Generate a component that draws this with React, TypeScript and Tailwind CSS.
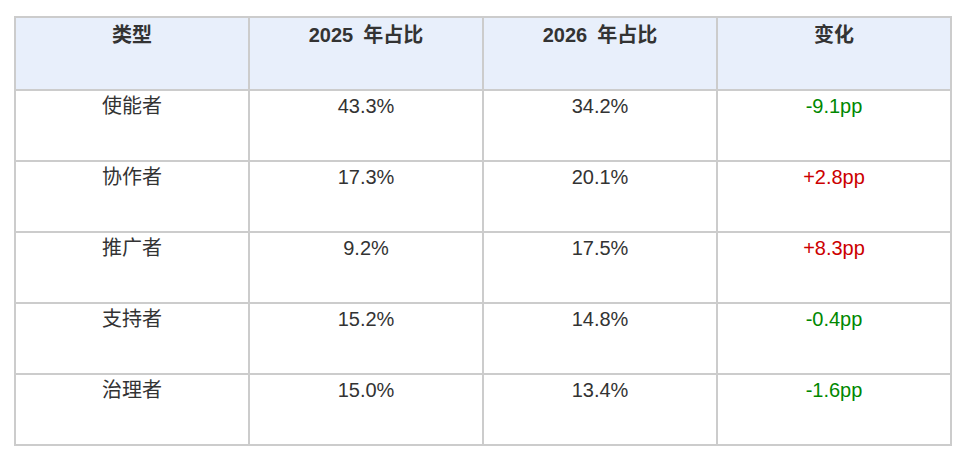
import React from 'react';

const rows = [
  { type: '使能者', y25: '43.3%', y26: '34.2%', delta: '-9.1pp', up: false },
  { type: '协作者', y25: '17.3%', y26: '20.1%', delta: '+2.8pp', up: true },
  { type: '推广者', y25: '9.2%', y26: '17.5%', delta: '+8.3pp', up: true },
  { type: '支持者', y25: '15.2%', y26: '14.8%', delta: '-0.4pp', up: false },
  { type: '治理者', y25: '15.0%', y26: '13.4%', delta: '-1.6pp', up: false },
];

const headers = [
  { year: '', label: '类型' },
  { year: '2025', label: '年占比' },
  { year: '2026', label: '年占比' },
  { year: '', label: '变化' },
];

const App: React.FC = () => {
  return (
    <div
      className="w-[964px] h-[464px] bg-white pt-[16px] pl-[14px] text-[#333]"
      style={{ fontFamily: '"Liberation Sans", "Noto Sans CJK SC", sans-serif' }}
    >
      <div className="w-[938px] grid grid-cols-4 border-l-2 border-t-2 border-[#cccccc] text-[20px] leading-[24px]">
        {headers.map((h) => (
          <div
            key={h.label + h.year}
            className="h-[73px] bg-[#e8effb] border-r-2 border-b-2 border-[#cccccc] text-center font-bold pt-[5px]"
          >
            {h.year && <span className="mr-[10px]">{h.year}</span>}
            {h.label}
          </div>
        ))}
        {rows.map((r) => (
          <React.Fragment key={r.type}>
            <div className="h-[71px] border-r-2 border-b-2 border-[#cccccc] text-center pt-[3px]">{r.type}</div>
            <div className="h-[71px] border-r-2 border-b-2 border-[#cccccc] text-center pt-[3px]">{r.y25}</div>
            <div className="h-[71px] border-r-2 border-b-2 border-[#cccccc] text-center pt-[3px]">{r.y26}</div>
            <div
              className={
                'h-[71px] border-r-2 border-b-2 border-[#cccccc] text-center pt-[3px] ' +
                (r.up ? 'text-[#cc0000]' : 'text-[#008800]')
              }
            >
              {r.delta}
            </div>
          </React.Fragment>
        ))}
      </div>
    </div>
  );
};

export default App;
